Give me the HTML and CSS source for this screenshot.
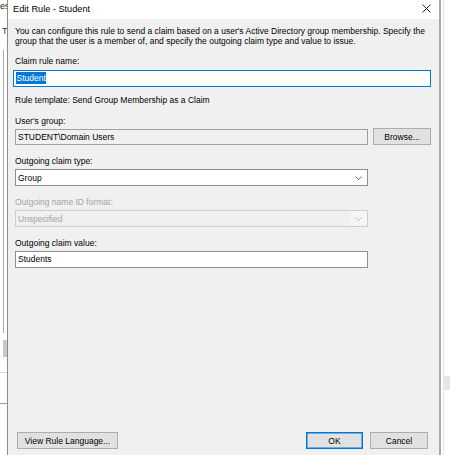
FILE: index.html
```html
<!DOCTYPE html>
<html>
<head>
<meta charset="utf-8">
<link rel="stylesheet" href="styles.css">
</head>
<body>
<div class="desktop">
  <div class="bg-window">
    <div class="bg-title">es</div>
    <div class="bg-tab">T</div>
    <div class="bg-list"></div>
    <div class="bg-thumb"></div>
    <div class="bg-rule bg-rule-a"></div>
    <div class="bg-rule bg-rule-b"></div>
    <div class="bg-right-line"></div>
    <div class="bg-right-block"></div>
  </div>

  <div class="dialog">
    <div class="titlebar">
      <span class="title">Edit Rule - Student</span>
      <svg class="close" width="9" height="9" viewBox="0 0 9 9"><path d="M0.5 0.5 L8.5 8.5 M8.5 0.5 L0.5 8.5" stroke="#111" stroke-width="0.9" fill="none"/></svg>
    </div>
    <div class="body">
      <p class="desc">You can configure this rule to send a claim based on a user's Active Directory group membership. Specify the<br>group that the user is a member of, and specify the outgoing claim type and value to issue.</p>

      <div class="label first">Claim rule name:</div>
      <div class="textbox focused wide"><span class="sel">Student</span></div>

      <div class="label template">Rule template: Send Group Membership as a Claim</div>

      <div class="label spaced">User's group:</div>
      <div class="row">
        <div class="textbox readonly">STUDENT\Domain Users</div>
        <div class="button browse">Browse...</div>
      </div>

      <div class="label spaced">Outgoing claim type:</div>
      <div class="combo">
        <span class="combo-text">Group</span>
        <span class="arrow"><svg width="7" height="4" viewBox="0 0 7 4"><path d="M0.5 0.5 L3.5 3.5 L6.5 0.5" stroke="#555" stroke-width="0.9" fill="none"/></svg></span>
      </div>

      <div class="label spaced disabled">Outgoing name ID format:</div>
      <div class="combo is-disabled">
        <span class="combo-text">Unspecified</span>
        <span class="arrow"><svg width="7" height="4" viewBox="0 0 7 4"><path d="M0.5 0.5 L3.5 3.5 L6.5 0.5" stroke="#b5b5b5" stroke-width="0.9" fill="none"/></svg></span>
      </div>

      <div class="label spaced">Outgoing claim value:</div>
      <div class="textbox">Students</div>
    </div>
    <div class="footer">
      <div class="button view">View Rule Language...</div>
      <div class="footer-right">
        <div class="button ok">OK</div>
        <div class="button cancel">Cancel</div>
      </div>
    </div>
  </div>
</div>
</body>
</html>
```

FILE: styles.css
```css
* { box-sizing: border-box; }
html, body { margin: 0; padding: 0; }
body {
  font-family: "Liberation Sans", Arial, sans-serif;
  font-size: 8.5px;
  color: #000;
  background: #fff;
}
.desktop {
  position: relative;
  width: 450px;
  height: 455px;
  overflow: hidden;
  background: #fff;
}
.bg-window { position: absolute; inset: 0; }
.bg-title {
  position: absolute;
  left: 0;
  top: 1px;
  font-size: 9px;
  line-height: 11px;
  color: #222;
}
.bg-tab {
  position: absolute;
  left: 2px;
  top: 26px;
  font-size: 9px;
  line-height: 10px;
  color: #333;
}
.bg-list {
  position: absolute;
  left: 3px;
  top: 50px;
  width: 1px;
  height: 283px;
  background: #a8a8a8;
}
.bg-thumb {
  position: absolute;
  left: 3px;
  top: 340px;
  width: 4px;
  height: 17px;
  background: #c8c8c8;
}
.bg-rule {
  position: absolute;
  left: 0;
  width: 8px;
  height: 1px;
}
.bg-rule-a { top: 372px; background: #d6d6d6; }
.bg-rule-b { top: 403px; background: #9a9a9a; }
.bg-right-line {
  position: absolute;
  left: 443px;
  top: 0;
  width: 1px;
  height: 455px;
  background: #e4e4e4;
}
.bg-right-block {
  position: absolute;
  left: 443px;
  top: 376px;
  width: 7px;
  height: 14px;
  background: #e6e6e6;
}

.dialog {
  position: absolute;
  left: 7px;
  top: 0;
  width: 434px;
  height: 467px;
  background: #f0f0f0;
  border-left: 1px solid #8c8c8c;
  border-right: 2px solid #a9a9a9;
  display: flex;
  flex-direction: column;
}
.titlebar {
  height: 19px;
  background: #fff;
  display: flex;
  align-items: center;
  justify-content: space-between;
  padding: 0 8px 1px 5px;
}
.title {
  font-size: 9.2px;
  line-height: 11px;
}
.close { display: block; margin-top: -2px; }

.body {
  padding: 0 0 0 7px;
  display: flex;
  flex-direction: column;
  align-items: flex-start;
}
.desc {
  margin: 7px 0 0 0;
  line-height: 10px;
  white-space: nowrap;
}
.label {
  line-height: 10px;
  white-space: nowrap;
}
.label.first { margin-top: 10px; }
.label.template { margin-top: 8px; }
.label.spaced { margin-top: 11px; }
.label.disabled { color: #a3a3a3; }

.textbox {
  margin-top: 3px;
  width: 353px;
  height: 17px;
  border: 1px solid #8e8e8e;
  background: #fff;
  padding: 0 2px;
  line-height: 15px;
  white-space: nowrap;
}
.textbox.wide {
  margin-left: -2px;
  margin-top: 4px;
  width: 418px;
}
.textbox.focused { border-color: #0078d7; }
.sel {
  display: inline-block;
  background: #0078d7;
  color: #fff;
  line-height: 12px;
  padding: 0 0.5px;
  vertical-align: 0;
}
.textbox.readonly {
  margin-top: 0;
  background: #f0f0f0;
  border-color: #a0a0a0;
}

.row {
  margin-top: 2px;
  display: flex;
  align-items: flex-start;
  gap: 5px;
}
.row .textbox { margin-top: 1px; height: 16px; line-height: 14px; }

.button {
  height: 17px;
  border: 1px solid #adadad;
  background: #e1e1e1;
  display: flex;
  align-items: center;
  justify-content: center;
  white-space: nowrap;
}
.browse { width: 58px; }

.combo {
  margin-top: 3px;
  width: 353px;
  height: 17px;
  border: 1px solid #8e8e8e;
  background: #fff;
  display: flex;
  align-items: center;
}
.combo-text {
  flex: 1;
  padding-left: 2px;
}
.arrow {
  width: 17px;
  height: 15px;
  display: flex;
  align-items: center;
  justify-content: center;
}
.arrow svg { display: block; margin-top: 1px; }
.combo.is-disabled {
  background: #f0f0f0;
  border-color: #cdcdcd;
  color: #a3a3a3;
}
.combo.is-disabled .arrow { background: #f5f5f5; }

.footer {
  margin-top: auto;
  padding: 0 11px 18px 9px;
  display: flex;
  justify-content: space-between;
  align-items: flex-end;
}
.view { width: 101px; }
.footer-right { display: flex; gap: 7px; }
.ok {
  width: 57px;
  border-color: #0078d7;
  box-shadow: inset 0 0 0 0.5px #0078d7;
}
.cancel { width: 58px; }
```
